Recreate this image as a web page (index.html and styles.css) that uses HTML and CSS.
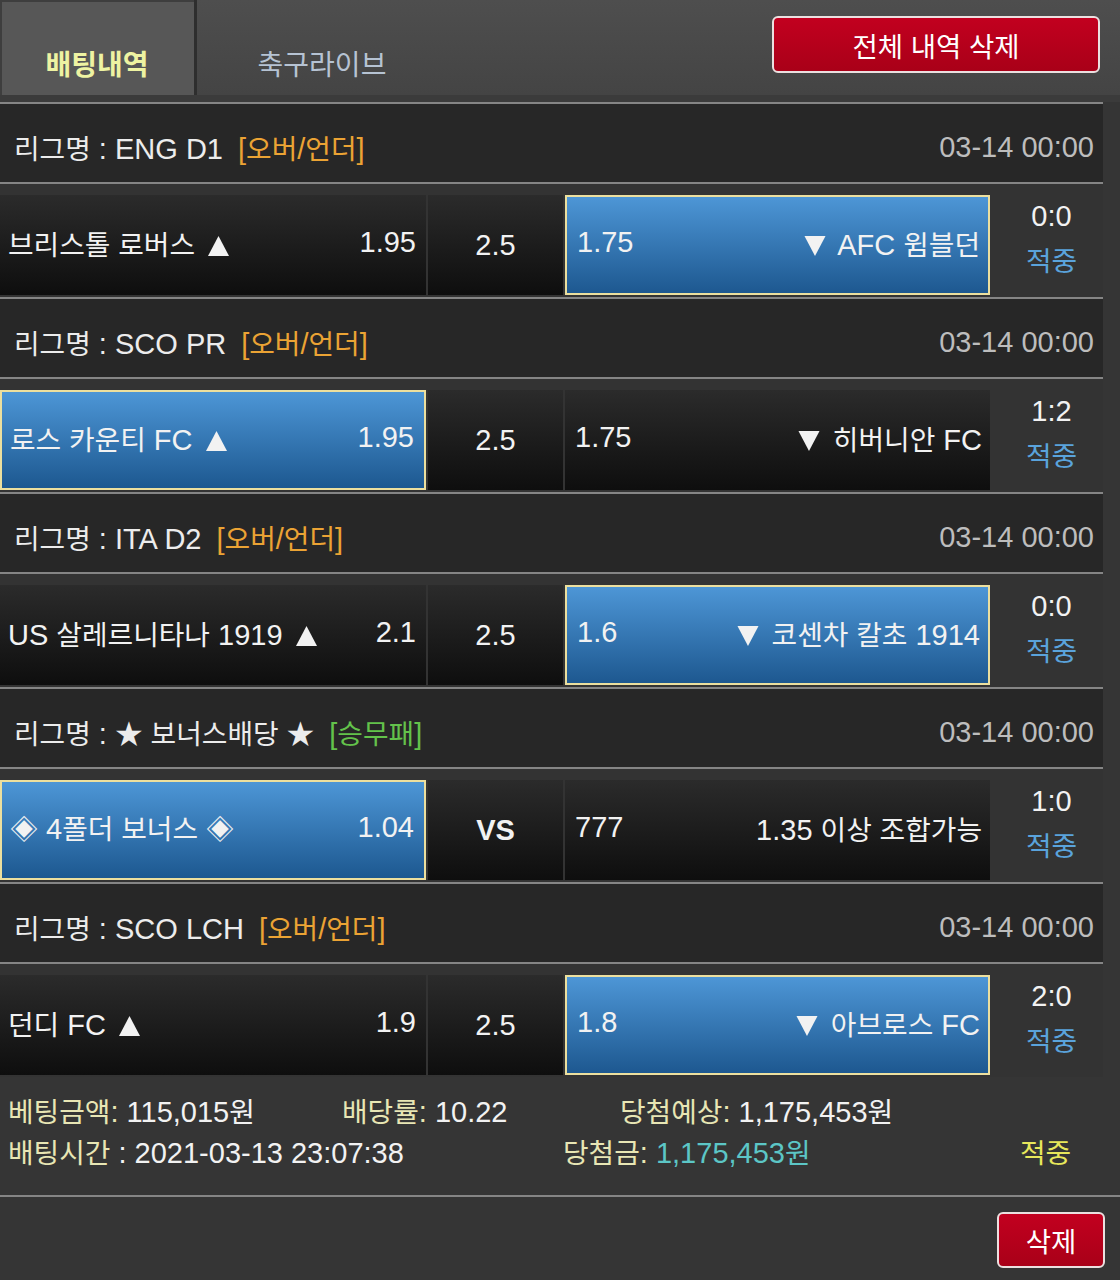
FILE: index.html
```html
<!DOCTYPE html>
<html lang="ko">
<head>
<meta charset="utf-8">
<title>배팅내역</title>
<link rel="stylesheet" href="styles.css">
</head>
<body>
<div class="topbar">
  <div class="tab active">배팅내역</div>
  <div class="tab">축구라이브</div>
  <button class="btn-red btn-all">전체 내역 삭제</button>
</div>

<div class="list">
  <section class="league">
    <div class="lg-head"><span class="lg-name"><span class="k">리그명</span> : ENG D1</span><span class="lg-type ou">[<span class="k">오버</span>/<span class="k">언더</span>]</span><span class="lg-date">03-14 00:00</span></div>
    <div class="bet">
      <div class="cell home"><span class="team"><span class="k">브리스톨 로버스</span> <svg class="tri up" viewBox="0 0 20 19"><path d="M10 0L20 19H0z"/></svg></span><span class="odd">1.95</span></div>
      <div class="cell mid">2.5</div>
      <div class="cell away sel"><span class="odd">1.75</span><span class="team"><svg class="tri dn" viewBox="0 0 20 19"><path d="M0 0H20L10 19z"/></svg> AFC <span class="k">윔블던</span></span></div>
      <div class="score"><span>0:0</span><span class="res k">적중</span></div>
    </div>
  </section>

  <section class="league">
    <div class="lg-head"><span class="lg-name"><span class="k">리그명</span> : SCO PR</span><span class="lg-type ou">[<span class="k">오버</span>/<span class="k">언더</span>]</span><span class="lg-date">03-14 00:00</span></div>
    <div class="bet">
      <div class="cell home sel"><span class="team"><span class="k">로스 카운티</span> FC <svg class="tri up" viewBox="0 0 20 19"><path d="M10 0L20 19H0z"/></svg></span><span class="odd">1.95</span></div>
      <div class="cell mid">2.5</div>
      <div class="cell away"><span class="odd">1.75</span><span class="team"><svg class="tri dn" viewBox="0 0 20 19"><path d="M0 0H20L10 19z"/></svg> <span class="k">히버니안</span> FC</span></div>
      <div class="score"><span>1:2</span><span class="res k">적중</span></div>
    </div>
  </section>

  <section class="league">
    <div class="lg-head"><span class="lg-name"><span class="k">리그명</span> : ITA D2</span><span class="lg-type ou">[<span class="k">오버</span>/<span class="k">언더</span>]</span><span class="lg-date">03-14 00:00</span></div>
    <div class="bet">
      <div class="cell home"><span class="team">US <span class="k">살레르니타나</span> 1919 <svg class="tri up" viewBox="0 0 20 19"><path d="M10 0L20 19H0z"/></svg></span><span class="odd">2.1</span></div>
      <div class="cell mid">2.5</div>
      <div class="cell away sel"><span class="odd">1.6</span><span class="team"><svg class="tri dn" viewBox="0 0 20 19"><path d="M0 0H20L10 19z"/></svg> <span class="k">코센차 칼초</span> 1914</span></div>
      <div class="score"><span>0:0</span><span class="res k">적중</span></div>
    </div>
  </section>

  <section class="league">
    <div class="lg-head"><span class="lg-name"><span class="k">리그명</span> : <span class="k">★ 보너스배당 ★</span></span><span class="lg-type wdl">[<span class="k">승무패</span>]</span><span class="lg-date">03-14 00:00</span></div>
    <div class="bet">
      <div class="cell home sel"><span class="team"><span class="k">◈</span> 4<span class="k">폴더 보너스 ◈</span></span><span class="odd">1.04</span></div>
      <div class="cell mid vs">VS</div>
      <div class="cell away"><span class="odd">777</span><span class="team">1.35 <span class="k">이상 조합가능</span></span></div>
      <div class="score"><span>1:0</span><span class="res k">적중</span></div>
    </div>
  </section>

  <section class="league">
    <div class="lg-head"><span class="lg-name"><span class="k">리그명</span> : SCO LCH</span><span class="lg-type ou">[<span class="k">오버</span>/<span class="k">언더</span>]</span><span class="lg-date">03-14 00:00</span></div>
    <div class="bet">
      <div class="cell home"><span class="team"><span class="k">던디</span> FC <svg class="tri up" viewBox="0 0 20 19"><path d="M10 0L20 19H0z"/></svg></span><span class="odd">1.9</span></div>
      <div class="cell mid">2.5</div>
      <div class="cell away sel"><span class="odd">1.8</span><span class="team"><svg class="tri dn" viewBox="0 0 20 19"><path d="M0 0H20L10 19z"/></svg> <span class="k">아브로스</span> FC</span></div>
      <div class="score"><span>2:0</span><span class="res k">적중</span></div>
    </div>
  </section>
</div>

<div class="summary">
  <div class="sum-line">
    <span class="s-a"><span class="lbl"><span class="k">베팅금액</span>:</span> 115,015<span class="k">원</span></span>
    <span class="s-b"><span class="lbl"><span class="k">배당률</span>:</span> 10.22</span>
    <span class="s-c"><span class="lbl"><span class="k">당첨예상</span>:</span> 1,175,453<span class="k">원</span></span>
  </div>
  <div class="sum-line">
    <span class="s-d"><span class="lbl k">배팅시간</span> : 2021-03-13 23:07:38</span>
    <span class="s-e"><span class="lbl"><span class="k">당첨금</span>:</span> <span class="win">1,175,453<span class="k">원</span></span></span>
    <span class="s-f k">적중</span>
  </div>
</div>

<div class="bottom">
  <button class="btn-red btn-del">삭제</button>
</div>
</body>
</html>
```

FILE: styles.css
```css
* {
  box-sizing: border-box;
  margin: 0;
  padding: 0;
}

body {
  width: 1120px;
  height: 1280px;
  overflow: hidden;
  background: #353535;
  color: #f2f2f2;
  font-family: "Liberation Sans", "Noto Sans CJK KR", sans-serif;
  font-size: 29px;
}

.k {
  font-family: "Noto Sans CJK KR", sans-serif;
  font-size: 0.96em;
}

.tri {
  width: 21px;
  height: 20px;
  fill: currentColor;
  vertical-align: -1px;
}

.tri.up {
  margin-left: 5px;
}

.tri.dn {
  width: 22px;
  margin-right: 5px;
}

/* top bar */
.topbar {
  display: flex;
  height: 102px;
  background: linear-gradient(#4e4e4e, #444444);
  border-bottom: 7px solid #3b3b3b;
}

.tab {
  width: 250px;
  display: flex;
  align-items: center;
  justify-content: center;
  padding-top: 30px;
  font-family: "Noto Sans CJK KR", sans-serif;
  font-size: 28px;
  color: #b6c3d3;
}

.tab.active {
  width: 197px;
  background: #575757;
  color: #eef3a2;
  font-weight: 700;
  border-right: 3px solid #2e2e2e;
  box-shadow: inset 2px 2px 0 #3e3e3e;
}

.btn-red {
  display: flex;
  align-items: center;
  justify-content: center;
  background: linear-gradient(#c2001f, #a90018);
  border: 2px solid #ebe0e0;
  border-radius: 6px;
  color: #ffffff;
  font-family: "Noto Sans CJK KR", sans-serif;
  font-size: 27.5px;
}

.btn-all {
  margin-left: auto;
  margin-top: 16px;
  margin-right: 20px;
  width: 328px;
  height: 57px;
}

/* league list */
.list {
  width: 1103px;
}

.league {
  border-top: 2px solid #858585;
}

.lg-head {
  display: flex;
  align-items: center;
  height: 80px;
  padding: 8px 9px 0 14px;
  background: #272727;
  border-bottom: 2px solid #858585;
  color: #ececec;
}

.lg-type {
  margin-left: 15px;
}

.ou {
  color: #eba334;
}

.wdl {
  color: #63c24b;
}

.lg-date {
  margin-left: auto;
  color: #bdbdbd;
}

.bet {
  display: grid;
  grid-template-columns: 426px 135px 425px 111px;
  column-gap: 2px;
  height: 113px;
  padding: 11px 0 8px;
  background: #333333;
}

.cell {
  display: flex;
  align-items: center;
  justify-content: space-between;
  background: linear-gradient(#2b2b2b, #0e0e0e);
  white-space: nowrap;
}

.home {
  padding: 0 10px 5px 8px;
}

.away {
  padding: 0 8px 5px 10px;
}

.mid {
  justify-content: center;
  padding-top: 1px;
}

.mid.vs {
  font-weight: 700;
}

.cell.sel {
  background: linear-gradient(#4d96d6, #1d5890);
  border: 2px solid #ecdf9e;
}

.score {
  display: flex;
  flex-direction: column;
  align-items: center;
  justify-content: center;
  padding: 0 0 14px 8px;
  line-height: 43px;
}

.res {
  color: #5aa3dc;
}

/* summary */
.summary {
  padding: 13px 0 23px 8px;
  border-bottom: 2px solid #858585;
  line-height: 41px;
  white-space: nowrap;
}

.sum-line {
  display: flex;
  height: 41px;
}

.lbl {
  color: #e8e6b4;
}

.s-a {
  width: 334px;
}

.s-b {
  width: 278px;
}

.s-d {
  width: 555px;
}

.s-e {
  width: 457px;
}

.win {
  color: #5cc6c6;
}

.s-f {
  color: #e7e75b;
}

.bottom {
  display: flex;
  justify-content: flex-end;
  padding: 15px 15px 0;
}

.btn-del {
  width: 108px;
  height: 56px;
}
```
